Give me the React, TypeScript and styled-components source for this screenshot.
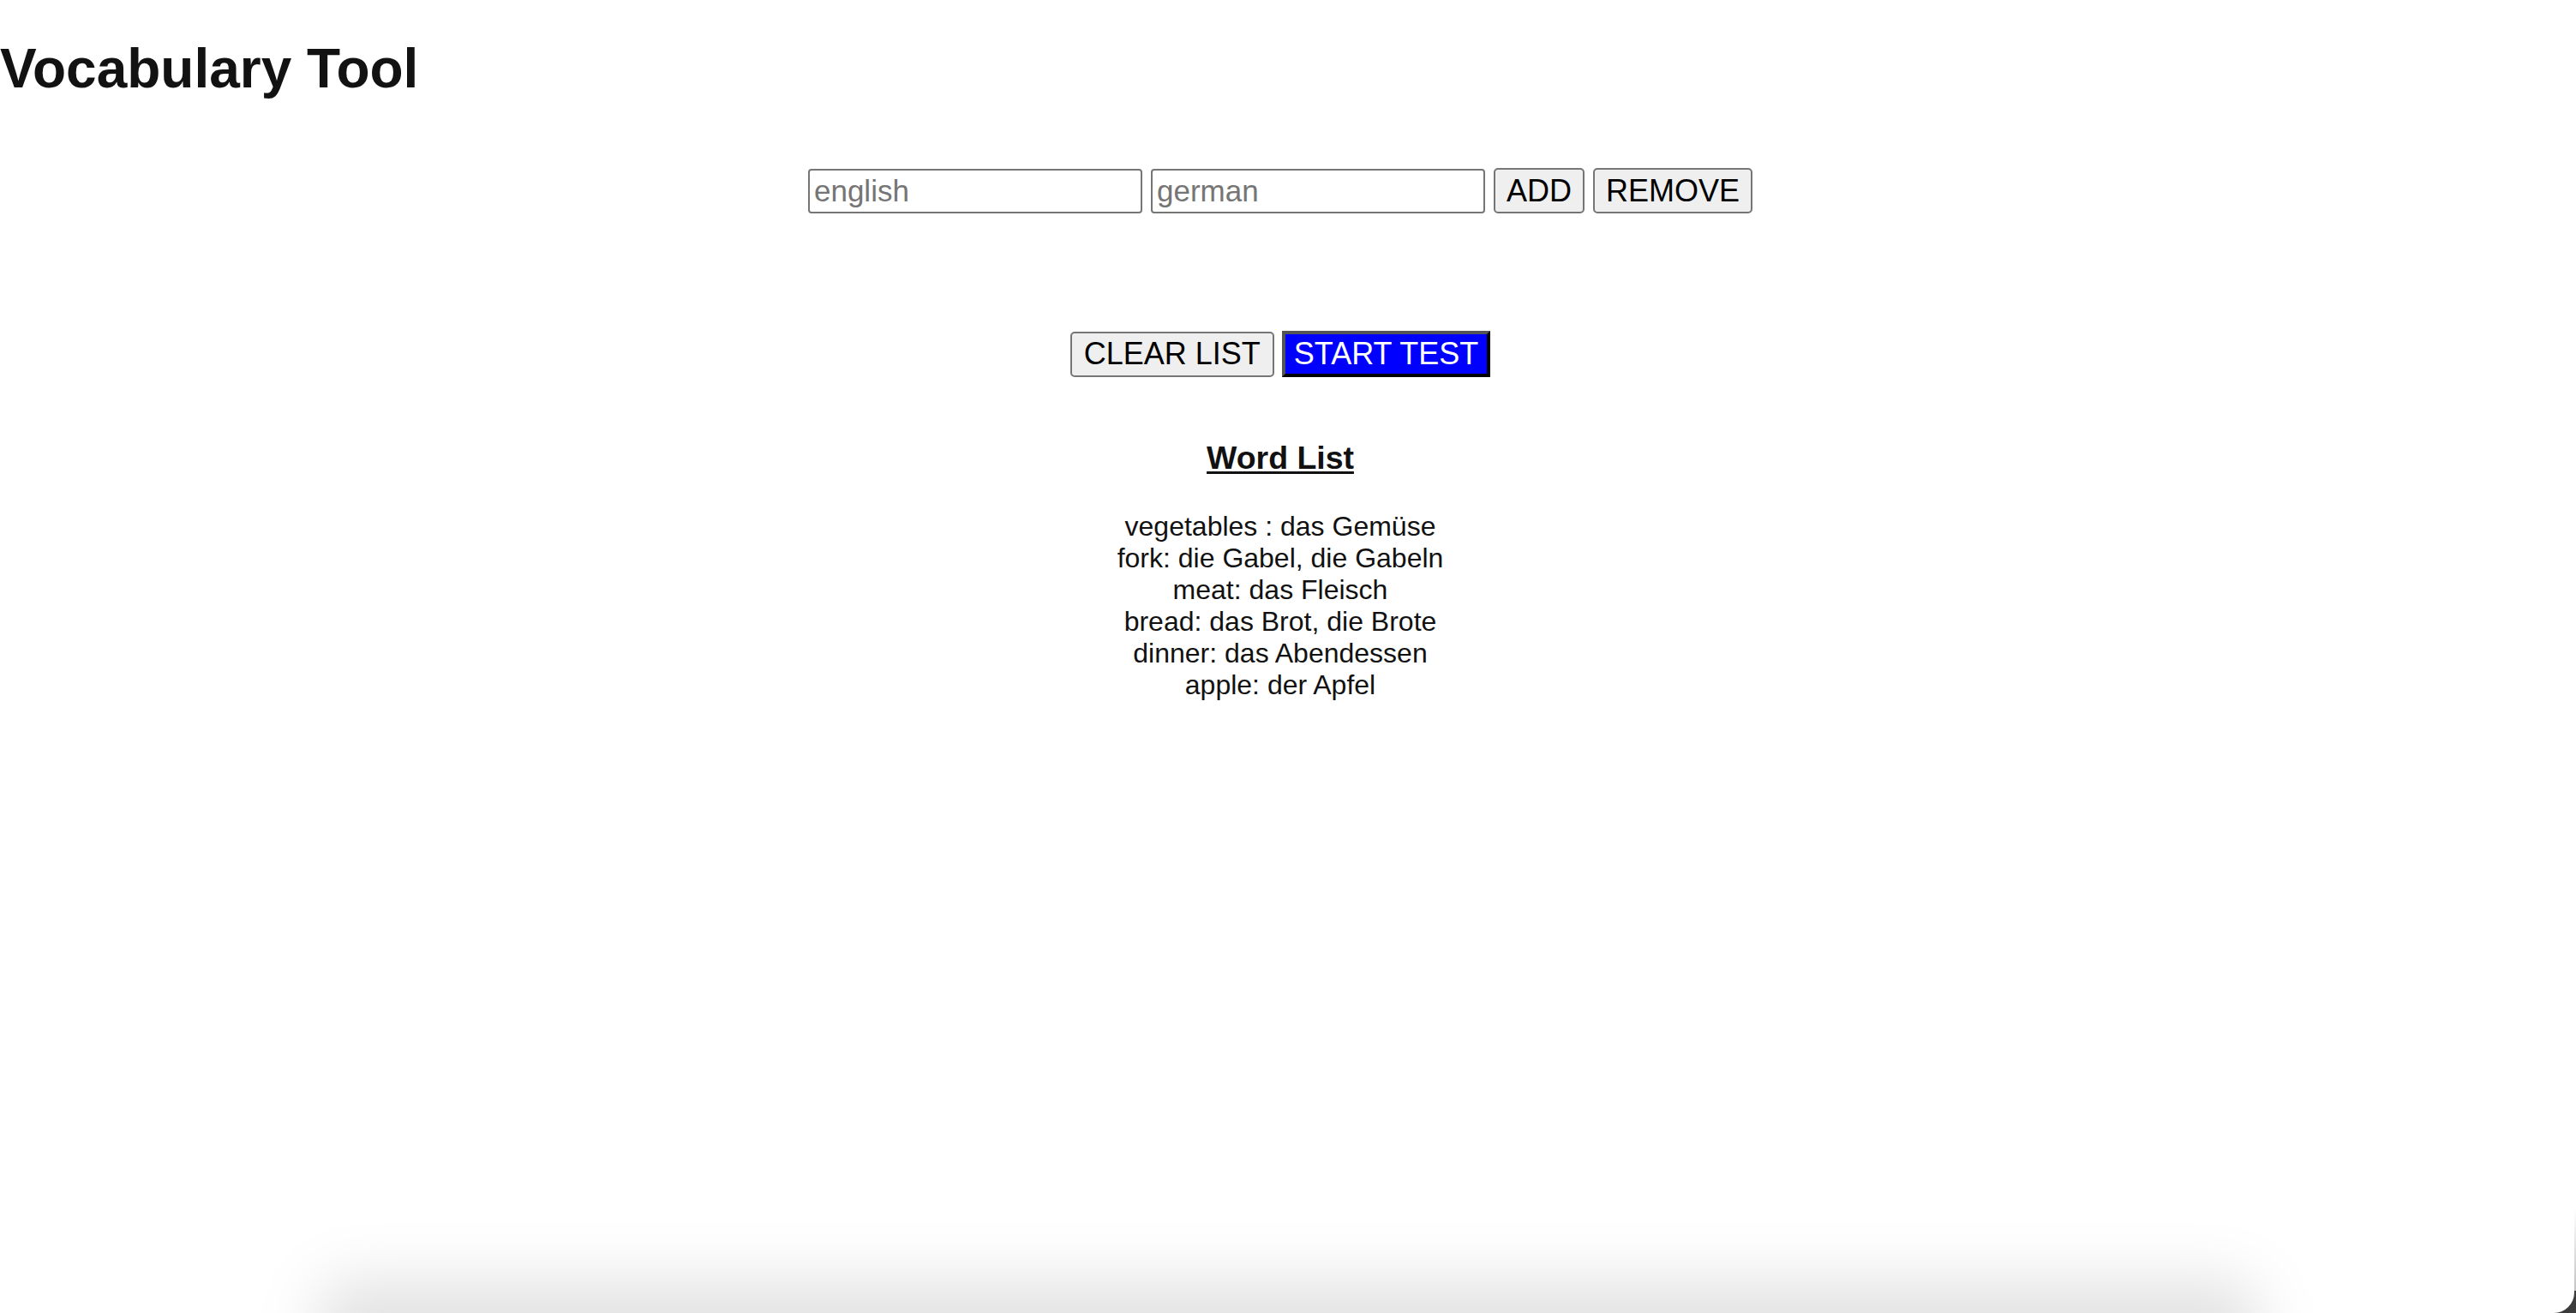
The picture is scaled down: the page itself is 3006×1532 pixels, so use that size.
import React from "react";
import styled, { createGlobalStyle } from "styled-components";

const GlobalStyle = createGlobalStyle`
  html, body {
    margin: 0;
    padding: 0;
    background: #ffffff;
  }
  body {
    font-family: "Liberation Sans", Arial, Helvetica, sans-serif;
    color: #111111;
    font-size: 32px;
    overflow: hidden;
  }
`;

const Page = styled.div`
  min-height: 1532px;
  display: flex;
  flex-direction: column;
`;

const Title = styled.h1`
  margin: 44px 0 0;
  font-size: 64px;
  font-weight: 700;
  line-height: 73px;
  color: #121212;
`;

const Content = styled.main`
  display: flex;
  flex-direction: column;
  align-items: center;
  padding-right: 18px;
`;

const Row = styled.div<{ $top: number; $gap: number }>`
  display: flex;
  align-items: center;
  gap: ${(p) => p.$gap}px;
  margin-top: ${(p) => p.$top}px;
`;

const TextInput = styled.input`
  box-sizing: border-box;
  width: 390px;
  height: 52px;
  padding: 0 5px;
  border: 2px solid #767676;
  border-radius: 4px;
  background: #ffffff;
  color: #000000;
  font-family: "Liberation Sans", Arial, Helvetica, sans-serif;
  font-size: 35px;
  outline: none;

  &::placeholder {
    color: #757575;
  }
`;

const Button = styled.button<{ $primary?: boolean; $pad: number }>`
  box-sizing: border-box;
  height: ${(p) => (p.$primary ? 54 : 53)}px;
  padding: 0 ${(p) => p.$pad}px;
  font-family: "Liberation Sans", Arial, Helvetica, sans-serif;
  font-size: 36px;
  line-height: 1;
  cursor: pointer;
  background: ${(p) => (p.$primary ? "#0000ff" : "#efefef")};
  color: ${(p) => (p.$primary ? "#ffffff" : "#000000")};
  border-style: solid;
  border-width: ${(p) => (p.$primary ? 4 : 2)}px;
  border-color: ${(p) =>
    p.$primary ? "#555555 #000000 #000000 #555555" : "#767676"};
  border-radius: ${(p) => (p.$primary ? 0 : 5)}px;
  white-space: nowrap;
`;

const ListHeading = styled.h3`
  margin: 73px 0 0;
  font-size: 37.44px;
  font-weight: 700;
  line-height: 43px;
  text-decoration: underline;
  text-underline-offset: 3px;
  color: #111111;
`;

const WordList = styled.div`
  margin-top: 40px;
  display: flex;
  flex-direction: column;
  align-items: center;
`;

const WordLine = styled.div`
  font-size: 32px;
  line-height: 37px;
  color: #111111;
  white-space: pre;
`;

const BottomShadow = styled.div`
  position: fixed;
  left: 370px;
  right: 370px;
  bottom: -80px;
  height: 120px;
  background: rgba(0, 0, 0, 0.11);
  filter: blur(34px);
  border-radius: 40px;
  pointer-events: none;
`;

const WindowCorner = styled.div`
  position: fixed;
  right: 2px;
  bottom: 0;
  width: 26px;
  height: 26px;
  border-bottom-right-radius: 24px;
  box-shadow: 14px 14px 0 14px #3c3c3c;
  pointer-events: none;
`;

const EdgeLine = styled.div`
  position: fixed;
  right: 0;
  top: 1410px;
  bottom: 20px;
  width: 2px;
  background: linear-gradient(to bottom, rgba(0, 0, 0, 0), rgba(0, 0, 0, 0.25));
  pointer-events: none;
`;

const words = [
  "vegetables : das Gemüse",
  "fork: die Gabel, die Gabeln",
  "meat: das Fleisch",
  "bread: das Brot, die Brote",
  "dinner: das Abendessen",
  "apple: der Apfel",
];

export default function App() {
  return (
    <>
      <GlobalStyle />
      <Page>
        <Title>Vocabulary Tool</Title>
        <Content>
          <Row $top={79} $gap={10}>
            <TextInput placeholder="english" />
            <TextInput placeholder="german" />
            <Button $pad={13}>ADD</Button>
            <Button $pad={13}>REMOVE</Button>
          </Row>
          <Row $top={137} $gap={9}>
            <Button $pad={14}>CLEAR LIST</Button>
            <Button $primary $pad={10}>
              START TEST
            </Button>
          </Row>
          <ListHeading>Word List</ListHeading>
          <WordList>
            {words.map((w) => (
              <WordLine key={w}>{w}</WordLine>
            ))}
          </WordList>
        </Content>
      </Page>
      <BottomShadow />
      <EdgeLine />
      <WindowCorner />
    </>
  );
}
